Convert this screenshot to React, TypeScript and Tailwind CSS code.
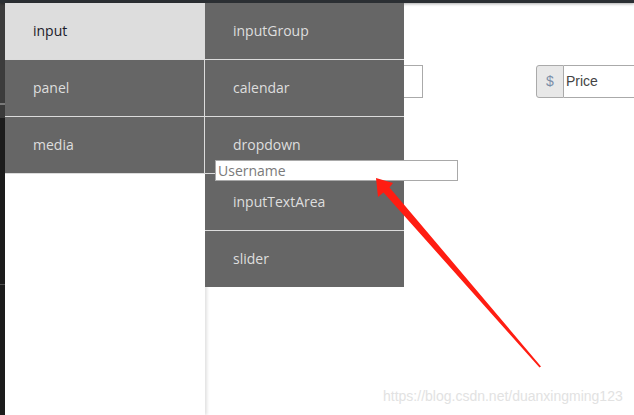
import React from 'react';

const col1 = ['input', 'panel', 'media'];
const col2 = ['inputGroup', 'calendar', 'dropdown', 'inputTextArea', 'slider'];

export default function App() {
  return (
    <div className="relative w-[634px] h-[415px] overflow-hidden bg-white font-['Open_Sans',sans-serif] text-[14px]">
      {/* top bar */}
      <div className="h-[3px] bg-[#2b2f33] shadow-[0_1px_3px_rgba(0,0,0,0.35)] relative z-10" />

      <div className="flex h-[412px]">
        {/* left editor strip */}
        <div className="w-[5px] flex flex-col shrink-0">
          <div className="h-[100px] bg-[#3c3c3c]" />
          <div className="h-[2px] bg-[#7a7a7a]" />
          <div className="h-[13px] bg-[#3a3a3a]" />
          <div className="h-[166px] bg-[#1c1c1c]" />
          <div className="h-px bg-[#4f4f4f]" />
          <div className="flex-1 bg-[#1c1c1c]" />
        </div>

        {/* first menu column */}
        <div className="w-[200px] flex flex-col shrink-0 shadow-[2px_0_3px_rgba(0,0,0,0.12)] relative z-10">
          {col1.map((name, i) => (
            <div
              key={name}
              className={`h-[57px] flex items-center pl-[28px] pb-[2px] border-b border-r border-[#dcdcdc] ${
                i === 0 ? 'bg-[#dddddd] text-[#1a1a2a]' : 'bg-[#666666] text-[#dedede]'
              }`}
            >
              {name}
            </div>
          ))}
          <div className="flex-1 bg-white" />
        </div>

        {/* second menu column */}
        <div className="w-[199px] flex flex-col shrink-0 relative z-10">
          {col2.map((name) => (
            <div
              key={name}
              className="h-[57px] flex items-center pl-[28px] pb-[2px] border-b border-[#dcdcdc] bg-[#666666] text-[#dedede] last:border-b-0 last:h-[56px]"
            >
              {name}
            </div>
          ))}
        </div>

        {/* page content behind */}
        <div className="flex-1 relative">
          <div className="absolute left-[-30px] top-[62px] w-[49px] h-[33px] border border-[#aaaaaa] bg-white" />
          <div className="absolute left-[132px] top-[62px] flex h-[33px]">
            <div className="w-[28px] flex items-center justify-center bg-[#e8e8e8] border border-[#aaaaaa] rounded-l-[3px] text-[#7b8ea8] font-['Liberation_Sans',sans-serif]">
              $
            </div>
            <div className="w-[80px] flex items-center pl-[2px] border-y border-[#aaaaaa] text-[#444] font-['Liberation_Sans',sans-serif]">
              Price
            </div>
          </div>
        </div>
      </div>

      {/* username input floating over the menu */}
      <input
        readOnly
        placeholder="Username"
        className="absolute left-[215px] top-[160px] w-[243px] h-[21px] z-20 border border-[#a9a9a9] bg-white px-[2px] text-[14px] placeholder:text-[#7a7a7a] outline-none"
      />

      {/* red annotation arrow */}
      <svg className="absolute left-0 top-0 z-30" width="634" height="415" viewBox="0 0 634 415">
        <polygon
          points="376,178 393,183 389.5,187.4 541,366.5 539.5,367.5 383.5,192.6 378,197"
          fill="#ff1d12"
        />
      </svg>

      {/* watermark */}
      <div className="absolute left-[383px] top-[389px] z-30 text-[14px] text-[#e2e2e2] font-['Liberation_Sans',sans-serif] leading-none whitespace-nowrap">
        https://blog.csdn.net/duanxingming123
      </div>
    </div>
  );
}
